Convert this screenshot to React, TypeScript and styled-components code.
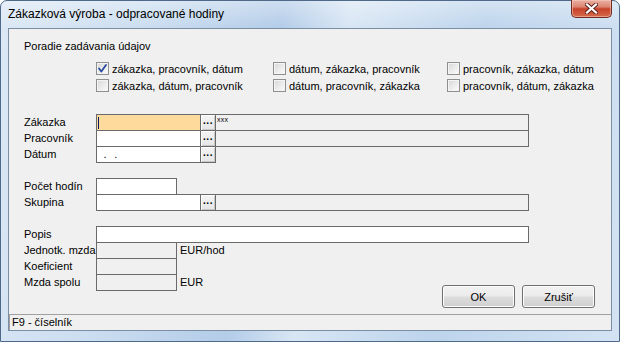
import React from 'react';
import styled, { createGlobalStyle } from 'styled-components';

const GlobalStyle = createGlobalStyle`
  html, body {
    margin: 0;
    padding: 0;
    width: 620px;
    height: 342px;
    overflow: hidden;
    background: #ffffff;
  }
  * { box-sizing: border-box; }
`;

const orderOptions = [
  { label: 'zákazka, pracovník, dátum', checked: true },
  { label: 'dátum, zákazka, pracovník', checked: false },
  { label: 'pracovník, zákazka, dátum', checked: false },
  { label: 'zákazka, dátum, pracovník', checked: false },
  { label: 'dátum, pracovník, zákazka', checked: false },
  { label: 'pracovník, dátum, zákazka', checked: false },
];

const CheckMark = () => (
  <svg width="9" height="9" viewBox="0 0 9 9">
    <path d="M1 4.5 L3.3 7.5 L8 1" fill="none" stroke="#2a4aa0" strokeWidth="1.8" strokeLinecap="round" strokeLinejoin="round" />
  </svg>
);

const CloseGlyph = () => (
  <svg width="13" height="11" viewBox="0 0 13 11">
    <path d="M2 1.5 L11 9.5 M11 1.5 L2 9.5" stroke="#5a2018" strokeWidth="4" strokeLinecap="square" />
    <path d="M2 1.5 L11 9.5 M11 1.5 L2 9.5" stroke="#ffffff" strokeWidth="2.2" strokeLinecap="square" />
  </svg>
);

export default function App() {
  return (
    <>
      <GlobalStyle />
      <Frame>
        <TitleBar>
          <Title>Zákazková výroba - odpracované hodiny</Title>
          <CloseButton><CloseGlyph /></CloseButton>
        </TitleBar>

        <Client>
          <Body>
            <GroupLabel>Poradie zadávania údajov</GroupLabel>
            <CheckGrid>
              {orderOptions.map((o, i) => (
                <CheckItem key={i}>
                  <CheckBox>{o.checked && <CheckMark />}</CheckBox>
                  {o.label}
                </CheckItem>
              ))}
            </CheckGrid>

            <Section gap={20}>
              <FieldRow>
                <Label>Zákazka</Label>
                <Input width={105} focused><Caret /></Input>
                <PickButton>...</PickButton>
                <Desc><Tiny>xxx</Tiny></Desc>
              </FieldRow>
              <FieldRow>
                <Label>Pracovník</Label>
                <Input width={105} />
                <PickButton>...</PickButton>
                <Desc />
              </FieldRow>
              <FieldRow>
                <Label>Dátum</Label>
                <Input width={105}><DateMask>{' .  .'}</DateMask></Input>
                <PickButton>...</PickButton>
              </FieldRow>
            </Section>

            <Section gap={15}>
              <FieldRow>
                <Label>Počet hodín</Label>
                <Input width={81} />
              </FieldRow>
              <FieldRow>
                <Label>Skupina</Label>
                <Input width={105} />
                <PickButton>...</PickButton>
                <Desc />
              </FieldRow>
            </Section>

            <Section gap={15}>
              <FieldRow>
                <Label>Popis</Label>
                <Input width={433} />
              </FieldRow>
              <Lower>
                <WageFields>
                  <FieldRow>
                    <Label>Jednotk. mzda</Label>
                    <Input width={81} readOnly />
                    <Unit>EUR/hod</Unit>
                  </FieldRow>
                  <FieldRow>
                    <Label>Koeficient</Label>
                    <Input width={81} readOnly />
                  </FieldRow>
                  <FieldRow>
                    <Label>Mzda spolu</Label>
                    <Input width={81} readOnly />
                    <Unit>EUR</Unit>
                  </FieldRow>
                </WageFields>
                <ButtonRow>
                  <DialogButton>OK</DialogButton>
                  <DialogButton>Zrušiť</DialogButton>
                </ButtonRow>
              </Lower>
            </Section>
          </Body>

          <StatusBar>F9 - číselník</StatusBar>
        </Client>
      </Frame>
    </>
  );
}

const Frame = styled.div`
  width: 620px;
  height: 342px;
  display: flex;
  flex-direction: column;
  border: 1px solid #4f6a88;
  border-radius: 7px 7px 0 0;
  padding: 0 7px 10px 7px;
  background:
    linear-gradient(180deg, rgba(255,255,255,0.35) 0px, rgba(255,255,255,0) 27px),
    linear-gradient(100deg, #dce8f5 0%, #cbddf0 22%, #b3cce8 42%, #d8e6f4 52%, #bdd4ec 72%, #d3e3f3 100%);
`;

const TitleBar = styled.div`
  height: 27px;
  display: flex;
  justify-content: space-between;
  align-items: flex-start;
`;

const Title = styled.div`
  font-family: 'Liberation Sans', Arial, sans-serif;
  font-size: 12px;
  color: #000000;
  line-height: 15px;
  margin-top: 6px;
`;

const CloseButton = styled.div`
  width: 41px;
  height: 18px;
  margin-top: -1px;
  display: flex;
  align-items: center;
  justify-content: center;
  border: 1px solid #6e2c22;
  border-top: none;
  border-radius: 0 0 5px 5px;
  background: linear-gradient(180deg, #eab0a2 0%, #dc8672 40%, #c8432b 52%, #d46a4c 100%);
  box-shadow: inset 0 0 0 1px rgba(255, 210, 200, 0.5);
`;

const Client = styled.div`
  flex: 1;
  display: flex;
  flex-direction: column;
  background: #f0f0f0;
  border: 1px solid #7c8ea4;
  font-family: 'Liberation Sans', Arial, sans-serif;
  font-size: 11px;
  color: #000000;
`;

const Body = styled.div`
  flex: 1;
  display: flex;
  flex-direction: column;
  padding: 11px 0 0 15px;
`;

const GroupLabel = styled.div`
  line-height: 13px;
`;

const CheckGrid = styled.div`
  display: grid;
  grid-template-columns: 177px 174px auto;
  grid-auto-rows: 17px;
  margin: 7px 0 0 72px;
`;

const CheckItem = styled.div`
  display: flex;
  align-items: center;
  gap: 3px;
  white-space: nowrap;
`;

const CheckBox = styled.div`
  width: 13px;
  height: 13px;
  border: 1px solid #8e8f8f;
  background: linear-gradient(135deg, #d6d6d6 0%, #eeeeee 60%, #fbfbfb 100%);
  box-shadow: inset 0 0 0 1px #f4f4f4;
  display: flex;
  align-items: center;
  justify-content: center;
`;

const Section = styled.div<{ gap: number }>`
  display: flex;
  flex-direction: column;
  margin-top: ${(p) => p.gap}px;
`;

const FieldRow = styled.div`
  display: flex;
  align-items: stretch;
  height: 17px;
  & + & { margin-top: -1px; }
`;

const Label = styled.div`
  width: 72px;
  line-height: 17px;
  white-space: nowrap;
`;

const Input = styled.div<{ width: number; focused?: boolean; readOnly?: boolean }>`
  width: ${(p) => p.width}px;
  border: 1px solid #6a6a6a;
  background: ${(p) => (p.focused ? '#fedb9c' : p.readOnly ? '#f0f0f0' : '#ffffff')};
  display: flex;
  align-items: center;
`;

const Caret = styled.span`
  display: block;
  width: 1px;
  height: 12px;
  margin-left: 1px;
  background: #0a1a6a;
`;

const DateMask = styled.span`
  white-space: pre;
  padding-left: 3px;
  line-height: 15px;
  letter-spacing: 0.5px;
  color: #000000;
`;

const PickButton = styled.div`
  width: 16px;
  margin-left: -1px;
  border: 1px solid #6a6a6a;
  background: linear-gradient(180deg, #f4f4f4, #e6e6e6);
  box-shadow: inset 1px 1px 0 #ffffff, inset -1px -1px 0 #c8c8c8;
  font-weight: bold;
  font-size: 10px;
  line-height: 11px;
  text-align: center;
  letter-spacing: 0.5px;
`;

const Desc = styled.div`
  width: 314px;
  margin-left: -1px;
  border: 1px solid #6a6a6a;
  background: #f0f0f0;
`;

const Tiny = styled.span`
  display: block;
  font-size: 7px;
  line-height: 7px;
  padding: 1px 0 0 1px;
  letter-spacing: 0.3px;
`;

const Unit = styled.div`
  margin-left: 3px;
  line-height: 16px;
`;

const Lower = styled.div`
  display: flex;
  justify-content: space-between;
  align-items: flex-end;
  margin-top: -1px;
`;

const WageFields = styled.div`
  display: flex;
  flex-direction: column;
  padding-bottom: 17px;
`;

const ButtonRow = styled.div`
  display: flex;
  gap: 7px;
  padding-right: 16px;
`;

const DialogButton = styled.div`
  width: 73px;
  height: 23px;
  border: 1px solid #707070;
  border-radius: 3px;
  background: linear-gradient(180deg, #f2f2f2 0%, #ebebeb 48%, #dddddd 52%, #cfcfcf 100%);
  box-shadow: inset 0 0 0 1px #fcfcfc;
  display: flex;
  align-items: center;
  justify-content: center;
`;

const StatusBar = styled.div`
  height: 16px;
  border-top: 1px solid #a0a0a0;
  border-left: 1px solid #a0a0a0;
  padding-left: 2px;
  line-height: 15px;
`;
